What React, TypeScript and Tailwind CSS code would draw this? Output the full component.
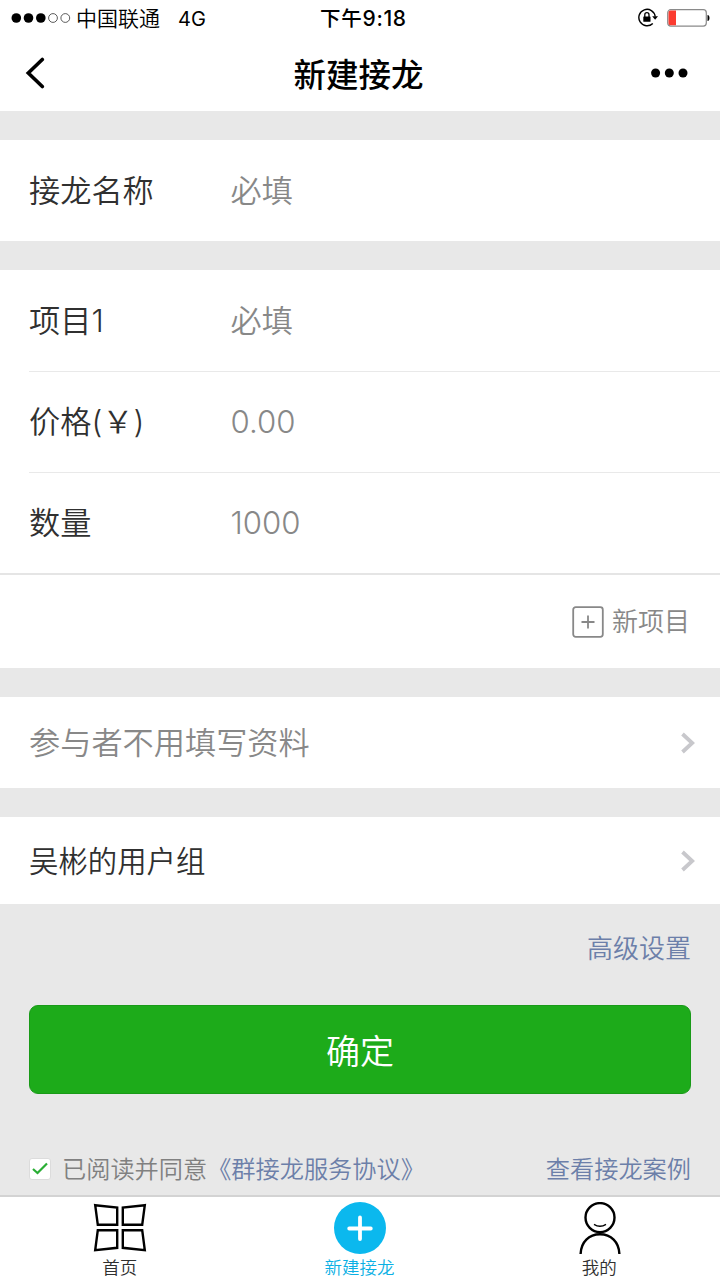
import React from 'react';

const StatusBar: React.FC = () => (
  <div className="flex h-9 items-center pr-[10px] pl-[11px] text-black">
    <svg width="60" height="12" viewBox="0 0 60 12">
      <circle cx="5.3" cy="6" r="4.8" />
      <circle cx="17.5" cy="6" r="4.8" />
      <circle cx="29.8" cy="6" r="4.8" />
      <circle cx="42" cy="6" r="4.4" fill="none" stroke="#333" strokeWidth="0.8" />
      <circle cx="54.3" cy="6" r="4.4" fill="none" stroke="#333" strokeWidth="0.8" />
    </svg>
    <span className="ml-[5px] pt-px text-[21px] font-[350]">中国联通</span>
    <span className="ml-[18px] w-[142px] pt-px text-[20px]">4G</span>
    <span className="pt-[2px] text-[20.5px] font-medium tracking-[0.8px]">
      下午<span className="text-[21px] tracking-[0.6px]">9:18</span>
    </span>
    <div className="ml-auto flex items-center">
      {/* rotation lock */}
      <svg width="22" height="20" viewBox="0 0 22 20">
        <path d="M15.8 15.4A8.2 8.2 0 1 1 18.2 8.5" fill="none" stroke="#000" strokeWidth="1.4" />
        <path d="M15.2 8.2h5.8l-2.9 3.6z" />
        <rect x="6.3" y="8.4" width="7.2" height="5.4" rx="0.6" />
        <path d="M7.8 9V6.8a2.1 2.1 0 0 1 4.2 0v2.2" fill="none" stroke="#000" strokeWidth="1.3" />
      </svg>
      {/* battery */}
      <svg className="ml-[8px]" width="43" height="18" viewBox="0 0 43 18">
        <rect x="0.7" y="0.7" width="38.6" height="16.4" rx="3" fill="#fff" stroke="#8a8a8a" strokeWidth="1.2" />
        <path d="M3.5 1.5H9v14.8H3.5a2 2 0 0 1-2-2V3.5a2 2 0 0 1 2-2z" fill="#fb3b30" />
        <path d="M40.5 6c1.5.3 2 1.4 2 3s-.5 2.7-2 3z" />
      </svg>
    </div>
  </div>
);

const Header: React.FC = () => (
  <div className="flex h-[75px] items-center justify-between pr-8 pb-[2px] pl-[25px]">
    <svg width="40" height="32" viewBox="0 0 40 32">
      <path d="M17.3 2.5L3.3 16L17.3 29.5" fill="none" stroke="#000" strokeWidth="3.6" strokeLinecap="round" />
    </svg>
    <h1 className="ml-1 pt-[7px] text-[32.5px] font-medium text-black">新建接龙</h1>
    <svg width="40" height="10" viewBox="0 0 40 10">
      <circle cx="7.6" cy="5" r="4.5" />
      <circle cx="21.3" cy="5" r="4.5" />
      <circle cx="35" cy="5" r="4.5" />
    </svg>
  </div>
);

const Field: React.FC<{ label: string; value: string; divider?: boolean }> = ({ label, value, divider }) => (
  <div className={`ml-[29px] flex h-[101px] items-center pt-[2px] text-[31.2px] font-[350] ${divider ? 'border-t border-[#e9e9e9]' : ''}`}>
    <div className="w-[201.5px] text-[#303030]">{label}</div>
    <div className="text-[#888]">{value}</div>
  </div>
);

const Chevron: React.FC = () => (
  <svg width="16" height="22" viewBox="0 0 16 22">
    <path d="M2.5 2L12.2 11L2.5 20" fill="none" stroke="#c8c8cc" strokeWidth="3.8" />
  </svg>
);

const HomeIcon: React.FC = () => (
  <svg width="54" height="52" viewBox="0 0 54 52" fill="none" stroke="#000" strokeWidth="2.4">
    <path d="M2.2 3.2L24.2 5.6V22.8H4.8z" />
    <path d="M51.8 3.2L29.8 5.6V22.8H49.2z" />
    <path d="M4.8 28.2H24.2V45.8L2.2 48.2z" />
    <path d="M49.2 28.2H29.8V45.8L51.8 48.2z" />
  </svg>
);

const AddIcon: React.FC = () => (
  <svg width="52" height="52" viewBox="0 0 52 52">
    <circle cx="26" cy="26" r="26" fill="#0bb8ee" />
    <path d="M26 15.5V37M15.2 26.5H36.8" stroke="#fff" strokeWidth="3.8" strokeLinecap="round" />
  </svg>
);

const UserIcon: React.FC = () => (
  <svg className="ml-px" width="44" height="52" viewBox="0 0 44 52" fill="none" stroke="#000" strokeWidth="2.4">
    <circle cx="22" cy="15.6" r="14.5" />
    <path d="M16 22.3q6 4 12 0" strokeWidth="1.4" />
    <path d="M2.6 52C3 40 11 32.3 22 32.3S41 40 41.4 52" />
  </svg>
);

const tabs = [
  { label: '首页', icon: <HomeIcon />, active: false },
  { label: '新建接龙', icon: <AddIcon />, active: true },
  { label: '我的', icon: <UserIcon />, active: false },
];

export default function App() {
  return (
    <div className="flex h-[1280px] w-[720px] flex-col overflow-hidden bg-[#e8e8e8] font-[Inter,'Noto_Sans_CJK_SC',sans-serif] leading-none">
      <header className="h-[111px] bg-white">
        <StatusBar />
        <Header />
      </header>

      <main className="flex flex-1 flex-col">
        <section className="mt-[29px] bg-white">
          <Field label="接龙名称" value="必填" />
        </section>

        <section className="mt-[29px] h-[398px] bg-white">
          <Field label="项目1" value="必填" />
          <Field label="价格(￥)" value="0.00" divider />
          <Field label="数量" value="1000" divider />
          <div className="flex h-[95px] items-center justify-end border-t-2 border-[#e5e5e5] pr-[30px] text-[26px] font-[350] text-[#888]">
            <svg className="mr-2" width="32" height="32" viewBox="0 0 32 32" fill="none" stroke="#888">
              <rect x="1.2" y="1.2" width="29.6" height="29.6" rx="2.5" strokeWidth="1.8" />
              <path d="M16 9.5V22.5M9.5 16H22.5" strokeWidth="1.8" />
            </svg>
            <span className="pt-px">新项目</span>
          </div>
        </section>

        <section className="mt-[29px] flex h-[91px] items-center justify-between bg-white pr-6 pl-[29px]">
          <span className="pt-[2px] text-[31.2px] font-[350] text-[#888]">参与者不用填写资料</span>
          <Chevron />
        </section>

        <section className="mt-[29px] flex h-[87px] items-center justify-between bg-white pt-px pr-6 pl-[29px]">
          <span className="pt-[2px] text-[29.4px] font-[350] text-[#303030]">吴彬的用户组</span>
          <Chevron />
        </section>

        <div className="px-[29px]">
          <div className="flex h-[101px] items-start justify-end pt-[32px] text-[26px] font-[350] text-[#6c7fa9]">高级设置</div>
          <button className="flex h-[89px] w-full items-center justify-center rounded-[9px] border border-[#199a18] bg-[#1dab1a] pt-[4px] text-[34px] font-[350] text-white">
            确定
          </button>
          <div className="mt-[63px] flex h-6 items-center text-[24.2px] font-[350]">
            <div className="mr-[11px] flex h-[22px] w-[22px] items-center justify-center rounded-[3px] border border-[#dcdcdc] bg-white">
              <svg width="18" height="16" viewBox="0 0 18 16">
                <path d="M2 8L6.5 12L16 2.5" fill="none" stroke="#2aae35" strokeWidth="2.2" />
              </svg>
            </div>
            <span className="pt-[2px] text-[#808080]">已阅读并同意</span>
            <span className="pt-[2px] text-[#6c7fa9]">《群接龙服务协议》</span>
            <span className="ml-auto pt-[2px] text-[#6c7fa9]">查看接龙案例</span>
          </div>
        </div>
      </main>

      <nav className="flex h-[85px] border-t-2 border-[#d3d3d3] bg-white pr-px">
        {tabs.map((tab) => (
          <div key={tab.label} className="flex flex-1 flex-col items-center pt-[5px]">
            <div className="flex h-[57px] items-start">{tab.icon}</div>
            <span className={`text-[17.5px] font-[350] ${tab.active ? 'text-[#0bb0e4]' : 'text-[#303030]'}`}>{tab.label}</span>
          </div>
        ))}
      </nav>
    </div>
  );
}
